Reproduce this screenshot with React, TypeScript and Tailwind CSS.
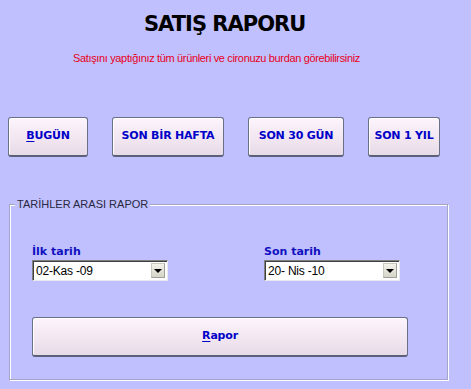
import React from "react";

const btn =
  "flex items-center justify-center h-[40px] rounded-[3px] border border-[#6a7088] border-b-2 border-b-[#5a6078] bg-gradient-to-b from-[#fdf4fc] to-[#e8dbe8] shadow-[inset_1px_1px_0_#ffffff] text-[#0000c8] font-bold text-[11px] [font-family:'DejaVu_Sans',sans-serif] tracking-[-0.2px]";

function Combo({ value }: { value: string }) {
  return (
    <div className="flex items-center w-[136px] h-[21px] bg-white border border-t-[#808080] border-l-[#808080] border-r-[#e8e8f0] border-b-[#e8e8f0] shadow-[inset_1px_1px_0_#404040]">
      <span className="flex-1 pl-[3px] text-[12px] text-black [font-family:'Liberation_Sans',sans-serif] leading-none tracking-[-0.2px]">
        {value}
      </span>
      <div className="mr-[2px] w-[14px] h-[15px] flex items-center justify-center bg-gradient-to-b from-[#f4f4ec] to-[#d4d4c8] border border-[#c8c8bc] border-b-[#a0a098] border-r-[#a0a098]">
        <div className="w-0 h-0 border-l-[4px] border-r-[4px] border-t-[4px] border-l-transparent border-r-transparent border-t-black mt-[1px]" />
      </div>
    </div>
  );
}

export default function App() {
  return (
    <div className="w-[471px] h-[389px] bg-[#c0c0ff] overflow-hidden flex flex-col">
      <div className="pt-[11px] pl-[144px] text-[21px] leading-[26px] font-bold text-black [font-family:'DejaVu_Sans',sans-serif] tracking-[-1px]">
        SATIŞ RAPORU
      </div>
      <div className="mt-[15px] pl-[73px] text-[11px] leading-[13px] text-[#e80020] [font-family:'Liberation_Sans',sans-serif] tracking-[-0.35px]">
        Satışını yaptığınız tüm ürünleri ve cironuzu burdan görebilirsiniz
      </div>
      <div className="mt-[52px] pl-[8px] flex gap-[24px]">
        <div className={btn + " w-[80px]"}>
          <span>
            <span className="underline underline-offset-2">B</span>UGÜN
          </span>
        </div>
        <div className={btn + " w-[112px]"}>SON BİR HAFTA</div>
        <div className={btn + " w-[96px]"}>SON 30 GÜN</div>
        <div className={btn + " w-[72px]"}>SON 1 YIL</div>
      </div>
      <div className="relative mt-[47px] ml-[9px] w-[439px] h-[176px] border border-[#a4a4c4] shadow-[inset_1px_1px_0_#ffffff,1px_1px_0_#ffffff]">
        <div className="absolute left-[5px] top-[-8px] px-[2px] bg-[#c0c0ff] text-[11px] leading-[14px] text-[#282840] [font-family:'Liberation_Sans',sans-serif]">
          TARİHLER ARASI RAPOR
        </div>
        <div className="pt-[39px] pl-[22px] flex">
          <div className="w-[232px] flex flex-col">
            <div className="text-[11px] leading-[16px] font-bold text-[#1010c0] [font-family:'DejaVu_Sans',sans-serif]">
              İlk tarih
            </div>
            <Combo value="02-Kas -09" />
          </div>
          <div className="flex flex-col">
            <div className="text-[11px] leading-[16px] font-bold text-[#1010c0] [font-family:'DejaVu_Sans',sans-serif]">
              Son tarih
            </div>
            <Combo value="20- Nis -10" />
          </div>
        </div>
        <div className={btn + " mt-[36px] ml-[22px] w-[376px]"}>
          <span>
            <span className="underline underline-offset-2">R</span>apor
          </span>
        </div>
      </div>
    </div>
  );
}
